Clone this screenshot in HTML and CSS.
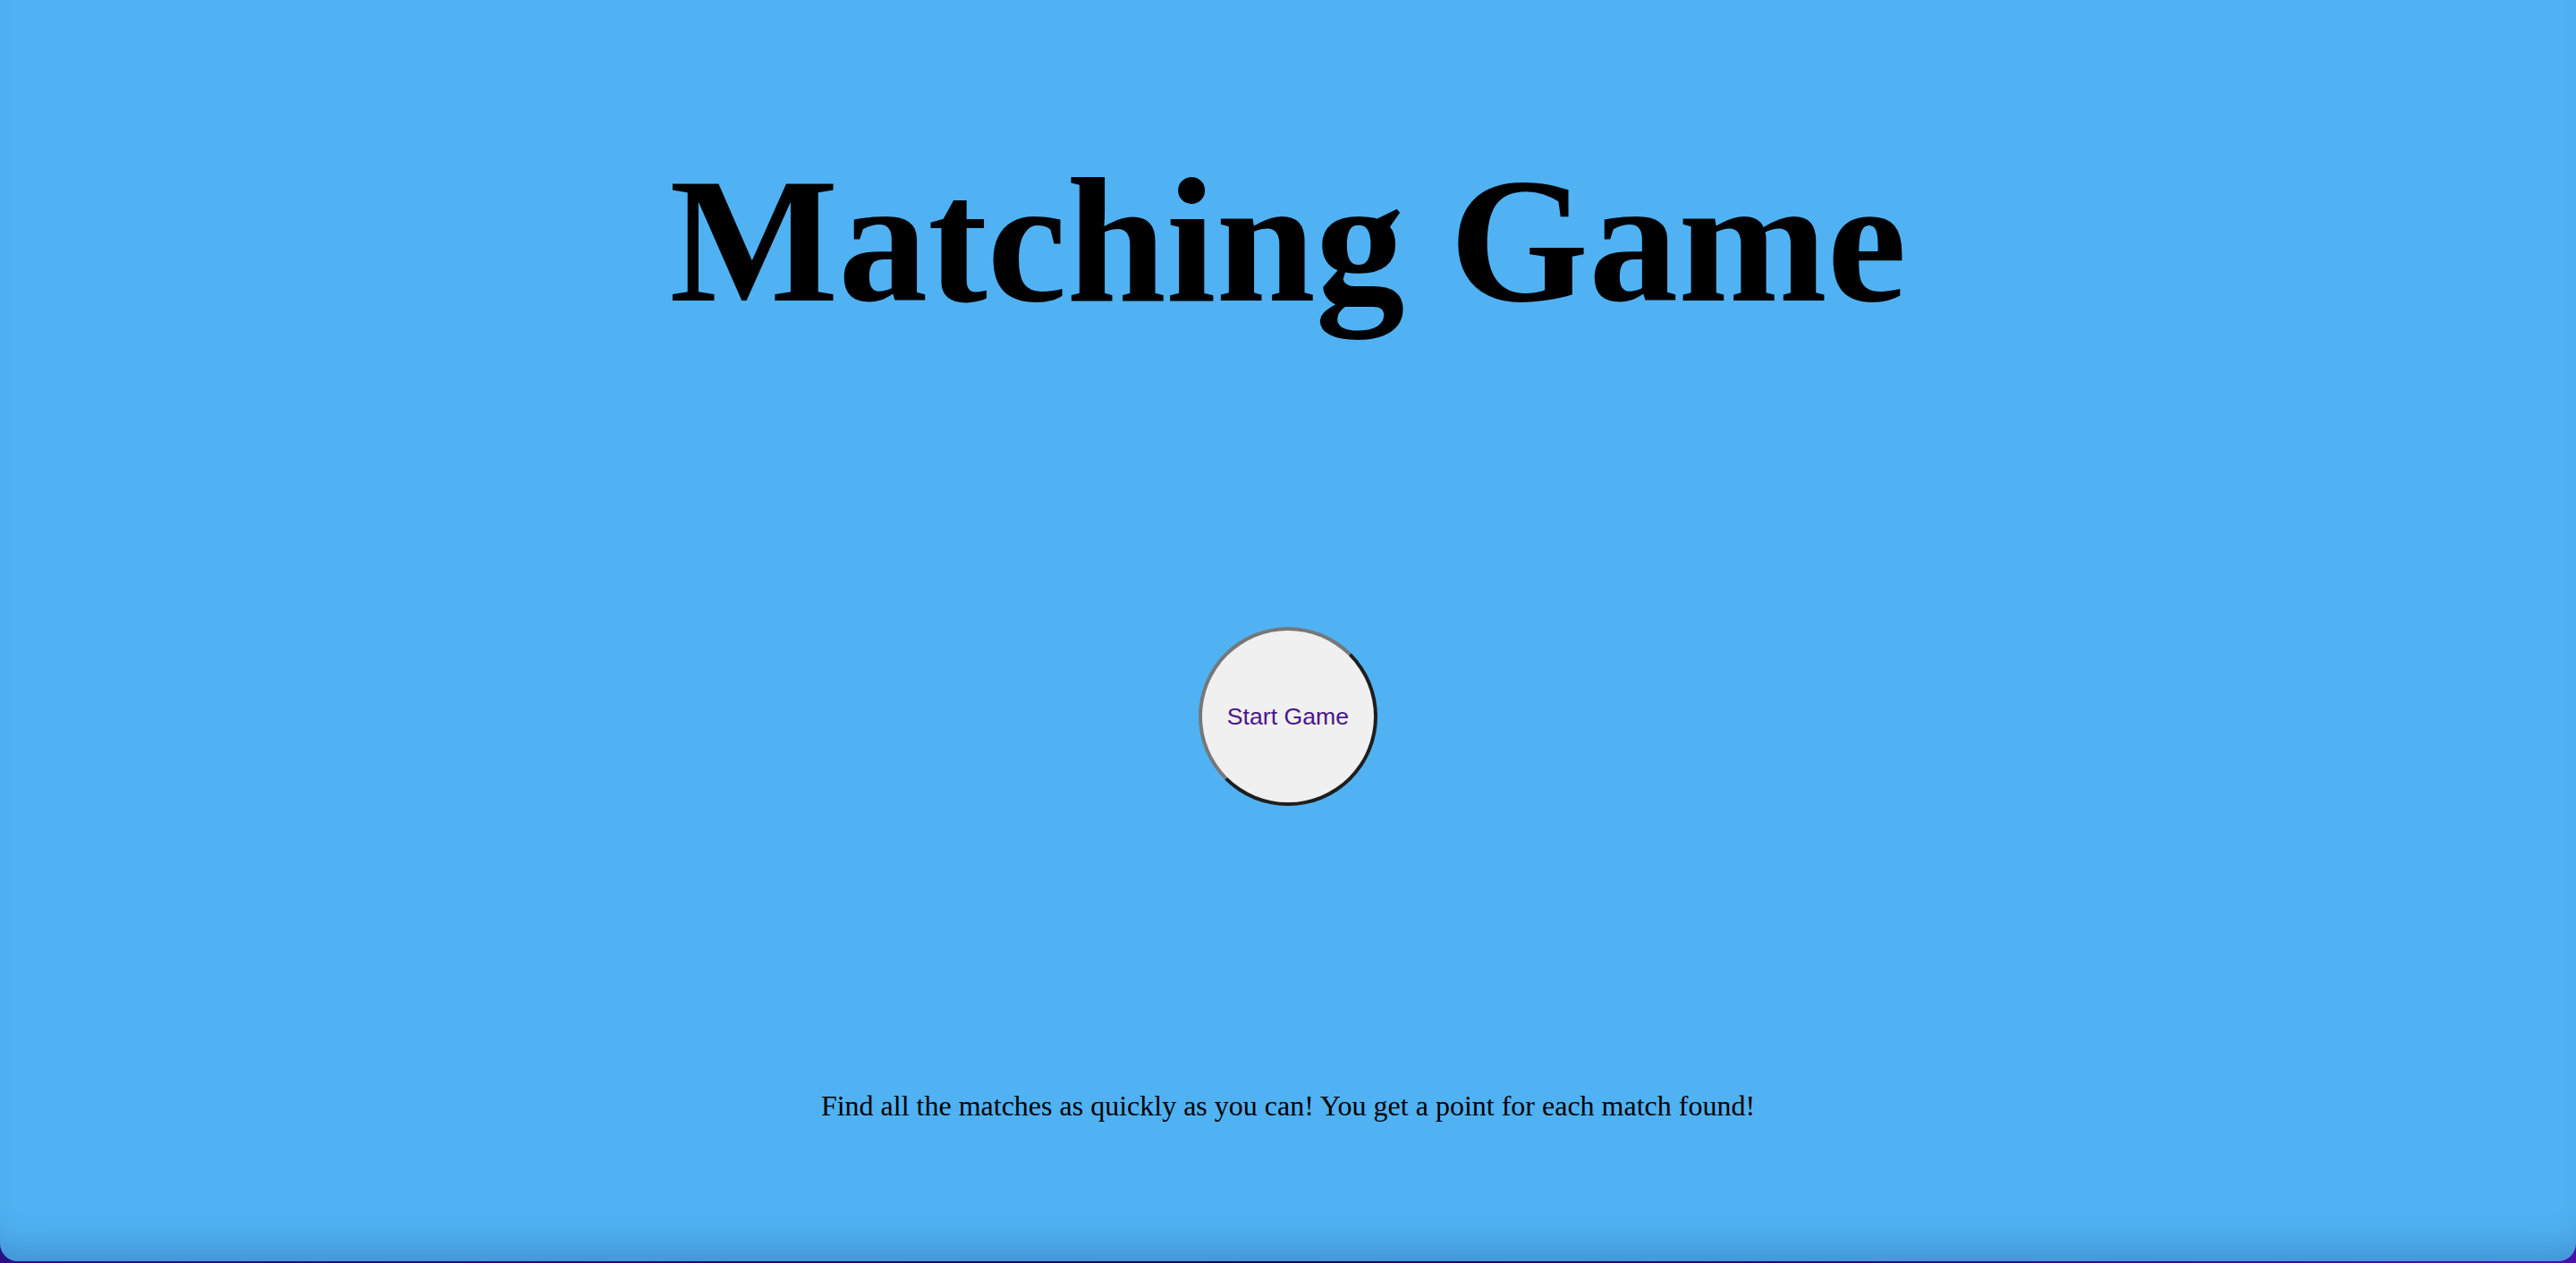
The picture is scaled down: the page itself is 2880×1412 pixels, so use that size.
FILE: index.html
```html
<!DOCTYPE html>
<html lang="en">
<head>
<meta charset="utf-8">
<title>Matching Game</title>
<link rel="stylesheet" href="styles.css">
</head>
<body>
<main class="screen">
  <h1 class="title">Matching Game</h1>
  <button class="start" type="button">Start Game</button>
  <p class="hint">Find all the matches as quickly as you can! You get a point for each match found!</p>
</main>
</body>
</html>
```
FILE: styles.css
```css
html, body {
  margin: 0;
  padding: 0;
  height: 100%;
}
body {
  background: linear-gradient(to right, #2a1282, #1a0850 50%, #4612a8);
  overflow: hidden;
}
.screen {
  box-sizing: border-box;
  height: 1410px;
  width: 100%;
  background: #50b2f2;
  border-radius: 0 0 20px 20px;
  box-shadow: inset 0 -40px 40px -30px rgba(10, 30, 90, 0.25);
  display: flex;
  flex-direction: column;
  align-items: center;
  padding-top: 154px;
  font-family: "Liberation Serif", "Times New Roman", serif;
  color: #000;
}
.title {
  margin: 0;
  font-size: 200px;
  line-height: 230px;
  font-weight: bold;
}
.start {
  margin-top: 317px;
  box-sizing: border-box;
  width: 200px;
  height: 200px;
  border-radius: 50%;
  background: #f0f0f0;
  border: 4px solid;
  border-color: #777777 #1e1e1e #1e1e1e #777777;
  font-family: "Liberation Sans", Arial, sans-serif;
  font-size: 26.67px;
  color: #4b1688;
  padding: 0;
  cursor: pointer;
}
.hint {
  margin: 317px 0 0;
  font-size: 32px;
  line-height: 37px;
}
```
